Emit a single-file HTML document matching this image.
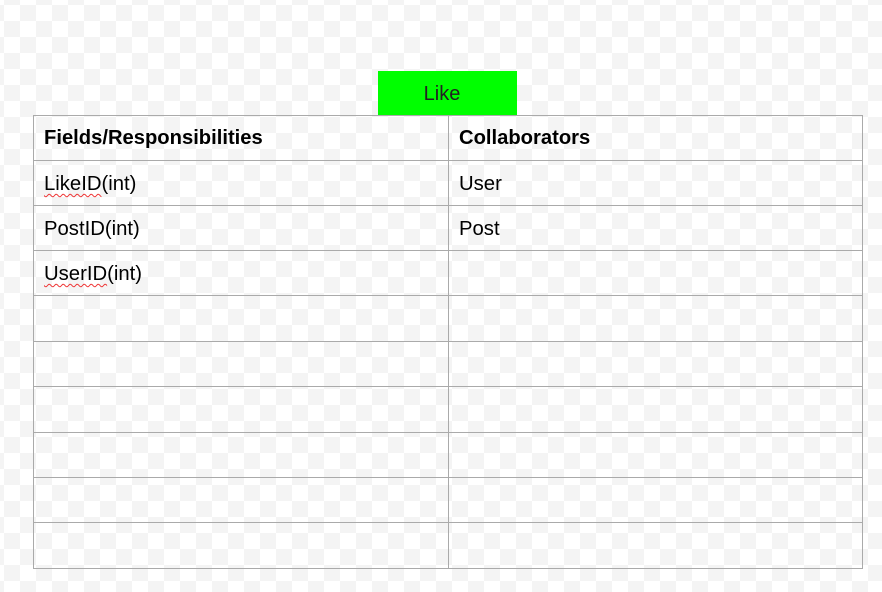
<!DOCTYPE html><html><head><style>
html,body{margin:0;padding:0}
body{width:882px;height:592px;position:relative;overflow:hidden;font-family:"Liberation Sans",Arial,sans-serif;
background-color:#fff;
background-image:linear-gradient(45deg,#f4f4f4 25%,transparent 25%,transparent 75%,#f4f4f4 75%),linear-gradient(45deg,#f4f4f4 25%,transparent 25%,transparent 75%,#f4f4f4 75%);
background-size:32px 32px;background-position:4px 5px,20px 21px;}
.like{position:absolute;left:378px;top:71px;width:128px;padding-right:11px;height:44px;background:#00ff00;color:#222;font-size:20px;line-height:46px;text-align:center}
.h{position:absolute;left:33px;width:830px;height:1px;background:#aaa}
.v{position:absolute;top:115px;height:454px;width:1px;background:#aaa}
.t{position:absolute;font-size:20.3px;color:#000;line-height:22px}
.b{font-weight:bold;font-size:20.2px}
.sq{text-decoration:underline wavy #e33;text-decoration-thickness:1px;text-underline-offset:3px}
</style></head><body>
<div class="like">Like</div>
<div class="h" style="top:115px"></div>
<div class="h" style="top:160px"></div>
<div class="h" style="top:205px"></div>
<div class="h" style="top:250px"></div>
<div class="h" style="top:295px"></div>
<div class="h" style="top:341px"></div>
<div class="h" style="top:386px"></div>
<div class="h" style="top:432px"></div>
<div class="h" style="top:477px"></div>
<div class="h" style="top:522px"></div>
<div class="h" style="top:568px"></div>
<div class="v" style="left:33px"></div>
<div class="v" style="left:448px"></div>
<div class="v" style="left:862px"></div>
<div class="t b" style="left:44px;top:127px">Fields/Responsibilities</div>
<div class="t b" style="left:459px;top:127px">Collaborators</div>
<div class="t" style="left:44px;top:173px"><span class="sq">LikeID</span>(int)</div>
<div class="t" style="left:459px;top:173px">User</div>
<div class="t" style="left:44px;top:218px">PostID(int)</div>
<div class="t" style="left:459px;top:218px">Post</div>
<div class="t" style="left:44px;top:263px"><span class="sq">UserID</span>(int)</div>
</body></html>
